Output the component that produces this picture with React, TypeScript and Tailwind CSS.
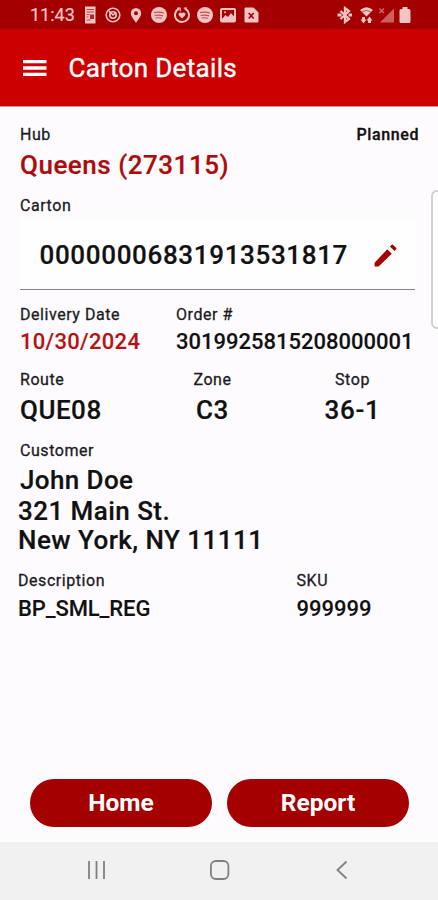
import type { ReactNode } from "react";

const label = "text-[16px] leading-5 font-normal tracking-[0.55px] text-[#1c1b1f] [-webkit-text-stroke:0.3px]";
const value = "text-[26px] leading-8 font-medium whitespace-nowrap [-webkit-text-stroke:0.2px]";
const smallValue = "text-[22px] leading-7 font-medium whitespace-nowrap [-webkit-text-stroke:0.1px]";
const button = "h-12 w-[182px] rounded-full bg-[#a40000] pt-px text-[24.5px] font-bold text-white";

function StatusIcon({ children }: { children: ReactNode }) {
  return (
    <svg viewBox="0 0 16 18" className="h-[18px] w-4 shrink-0" fill="none" stroke="currentColor" strokeWidth="1.6">
      {children}
    </svg>
  );
}

function Spotify() {
  return (
    <StatusIcon>
      <circle cx="8" cy="9" r="8" fill="currentColor" stroke="none" />
      <path d="M3 6.600q5-1.200 10 .4M3.600 9.500q4.600-1 8.500.4M4.500 12q3.500-.6 6.500.3" stroke="#c65050" strokeWidth="1.200" />
    </StatusIcon>
  );
}

function StatusBar() {
  return (
    <div className="flex h-[29px] items-center bg-[#a40000] pl-[30px] pr-[27px] pt-px text-[#f3c4c4]">
      <span className="w-[52px] text-[18px] leading-7 [-webkit-text-stroke:0.2px]">11:43</span>
      <div className="flex gap-[7px]">
        <StatusIcon>
          <path d="M3 .5h10.500v17H3z" fill="currentColor" stroke="none" />
          <path d="M4.500 3.500h7.500M4.500 6h7.500M4.500 8.500h3M4.500 11h2M4.500 14h4" stroke="#b84040" strokeWidth="1" />
          <path d="M8 8.500h4v4.500H8z" fill="#b02828" stroke="none" />
        </StatusIcon>
        <StatusIcon>
          <circle cx="8" cy="9" r="6.800" />
          <circle cx="8" cy="9" r="3.200" />
          <path d="M4 5l4 4 3-2.500" />
        </StatusIcon>
        <StatusIcon>
          <path fillRule="evenodd" d="M8 2a5.200 5.200 0 0 0-5.200 5.200C2.800 11 8 16.500 8 16.500s5.200-5.500 5.200-9.300A5.200 5.200 0 0 0 8 2zm0 3.200a2 2 0 1 1 0 4 2 2 0 0 1 0-4z" fill="currentColor" stroke="none" />
        </StatusIcon>
        <Spotify />
        <StatusIcon>
          <path d="M5 2.700A7 7 0 1 0 11 2.700" strokeWidth="2" />
          <path d="M3 2.200h3.200v3M13 2.200H9.800" strokeWidth="1.200" />
          <path d="M8 12.500L4.800 9.300a1.800 1.800 0 0 1 3.200-1.900 1.800 1.800 0 0 1 3.200 1.900z" fill="currentColor" stroke="none" />
        </StatusIcon>
        <Spotify />
        <StatusIcon>
          <rect x="1" y="3" width="14" height="12.500" rx="1" strokeWidth="2" />
          <path d="M2 13l3.500-4 2.500 2 3-4 3 3.500V15H2z" fill="currentColor" stroke="none" />
          <circle cx="5" cy="6.300" r="1" fill="currentColor" stroke="none" />
        </StatusIcon>
        <StatusIcon>
          <path d="M2 2h8.500L15 6.500V16H2z" fill="currentColor" stroke="currentColor" strokeWidth="1" strokeLinejoin="round" />
          <path d="M5.700 7l5 5.500M10.700 7l-5 5.500" stroke="#a40000" strokeWidth="1.700" />
        </StatusIcon>
      </div>
      <div className="ml-auto flex items-center gap-[5px]">
        <StatusIcon>
          <g transform="translate(1 0)">
            <path d="M3.500 5l8.500 8-4 3V2l4 3-8.500 8" strokeWidth="2.300" />
            <path d="M.5 9h4M11.500 9h4" strokeWidth="2.800" />
          </g>
        </StatusIcon>
        <StatusIcon>
          <g transform="translate(1.500 0)">
            <path d="M1.500 4Q8-1.500 14.500 4L8 10.500z" fill="currentColor" stroke="none" />
            <path d="M3.800 5.800Q8 3 12.200 5.800" stroke="#b84040" strokeWidth="0.900" />
            <path d="M2 13.500h1.500V11h3v2.500H8L5 17.500zM8 14.500l3-4 3 4h-1.500V17h-3v-2.500z" fill="currentColor" stroke="none" />
          </g>
        </StatusIcon>
        <StatusIcon>
          <path d="M16 2.500V16.500H2z" fill="#cf5f5f" stroke="none" />
          <path d="M1.500 2.500l4.500 4.500M6 2.500L1.500 7" stroke="#cf6f6f" strokeWidth="1.200" />
        </StatusIcon>
        <svg viewBox="0 0 12 18" className="h-[18px] w-3" fill="currentColor">
          <path d="M3.500 1h5v2H10q1.500 0 1.500 1.500v11Q11.500 17 10 17H2Q.5 17 .5 15.500v-11Q.5 3 2 3h1.500z" />
        </svg>
      </div>
    </div>
  );
}

function Header() {
  return (
    <header className="flex h-[78px] items-center border-b border-[#e58a94] bg-[#cc0000] pl-[23px] pt-px text-white">
      <svg viewBox="0 0 24 18" className="h-[18px] w-6" fill="currentColor">
        <path d="M0 1h23.500v3.300H0zM0 7.300h23.500v3.400H0zM0 13.700h23.500V17H0z" />
      </svg>
      <h1 className="ml-[21.5px] text-[26px] leading-8 font-normal tracking-[0.33px] [-webkit-text-stroke:0.4px]">Carton Details</h1>
    </header>
  );
}

function NavBar() {
  return (
    <nav className="flex h-[58px] items-center justify-between bg-[#f1f1f1] pl-[87px] pr-[86px] pb-0.5 text-[#808080]">
      <svg viewBox="0 0 20 20" className="size-5" stroke="currentColor" strokeWidth="1.800">
        <path d="M2 1v18M9.500 1v18M17 1v18" />
      </svg>
      <svg viewBox="0 0 20 20" className="size-5" fill="none" stroke="currentColor" strokeWidth="1.800">
        <rect x="0.900" y="1" width="17.500" height="18" rx="5" />
      </svg>
      <svg viewBox="0 0 20 20" className="size-5" fill="none" stroke="currentColor" strokeWidth="1.800">
        <path d="M14.500 1.500L5.500 10l9 8.500" />
      </svg>
    </nav>
  );
}

export default function App() {
  return (
    <div className="relative flex h-[900px] w-[438px] flex-col overflow-hidden bg-[#fefbff] font-[Roboto,sans-serif] text-[#111]">
      <StatusBar />
      <Header />
      <main className="flex flex-1 flex-col pl-5">
        <div className="mt-[18px] flex justify-between pr-[19px]">
          <span className={label}>Hub</span>
          <span className="text-[16px] leading-5 font-medium tracking-[0.6px] [-webkit-text-stroke:0.3px]">Planned</span>
        </div>
        <p className={`mt-1 ${value} tracking-[0.52px] text-[#ad0b0b]`}>Queens (273115)</p>
        <p className={`mt-[15px] ${label}`}>Carton</p>
        <div className="mt-[3px] mr-[23px] flex h-[71px] items-center border-b border-[#858388] bg-[#fffeff] pl-[19.5px] pr-[15px] pt-0.5">
          <span className={`${value} tracking-[0.65px]`}>00000006831913531817</span>
          <svg viewBox="0 0 24 24" className="ml-auto size-[29px]" fill="#a40000">
            <path d="M3 18v3h3.300L17.200 10.500l-3.700-3.700zM20.710 7.040a1 1 0 0 0 0-1.410l-2.340-2.340a1 1 0 0 0-1.410 0l-1.300 1.300 3.750 3.750z" />
          </svg>
        </div>
        <div className="mt-[15px] flex">
          <div className="w-[156px]">
            <p className={label}>Delivery Date</p>
            <p className={`mt-[3px] ${smallValue} tracking-[0.3px] text-[#b51212]`}>10/30/2024</p>
          </div>
          <div>
            <p className={label}>Order #</p>
            <p className={`mt-[3px] ${smallValue}`}>3019925815208000001</p>
          </div>
        </div>
        <div className="mt-3.5 flex">
          <div className="w-[142px]">
            <p className={label}>Route</p>
            <p className={`mt-1 ${value} tracking-[0.5px]`}>QUE08</p>
          </div>
          <div className="w-[101px] text-center">
            <p className={label}>Zone</p>
            <p className={`mt-1 ${value} tracking-[0.5px]`}>C3</p>
          </div>
          <div className="ml-[39px] w-[101px] text-center">
            <p className={label}>Stop</p>
            <p className={`mt-1 ${value} tracking-[0.7px]`}>36-1</p>
          </div>
        </div>
        <p className={`mt-[15px] ${label}`}>Customer</p>
        <p className={`mt-[3px] ${value} tracking-[0.4px]`}>John Doe</p>
        <div className="-ml-0.5">
          <p className={`-mt-px ${value} tracking-[0.45px]`}>321 Main St.</p>
          <p className={`-mt-[3px] ${value} tracking-[0.45px]`}>New York, NY 11111</p>
          <div className="mt-[15px] flex">
            <div className="w-[278.5px]">
              <p className={label}>Description</p>
              <p className={`mt-1 ${smallValue} tracking-[-0.1px]`}>BP_SML_REG</p>
            </div>
            <div>
              <p className={label}>SKU</p>
              <p className={`mt-1 ${smallValue}`}>999999</p>
            </div>
          </div>
        </div>
        <div className="mt-auto mb-[15px] ml-2.5 flex gap-[15px]">
          <button className={button}>Home</button>
          <button className={button}>Report</button>
        </div>
      </main>
      <NavBar />
      {/* edge panel handle */}
      <div className="absolute top-[190px] -right-2 h-[139px] w-[15px] rounded-md border-2 border-[#d3d1d5] bg-white" />
    </div>
  );
}
